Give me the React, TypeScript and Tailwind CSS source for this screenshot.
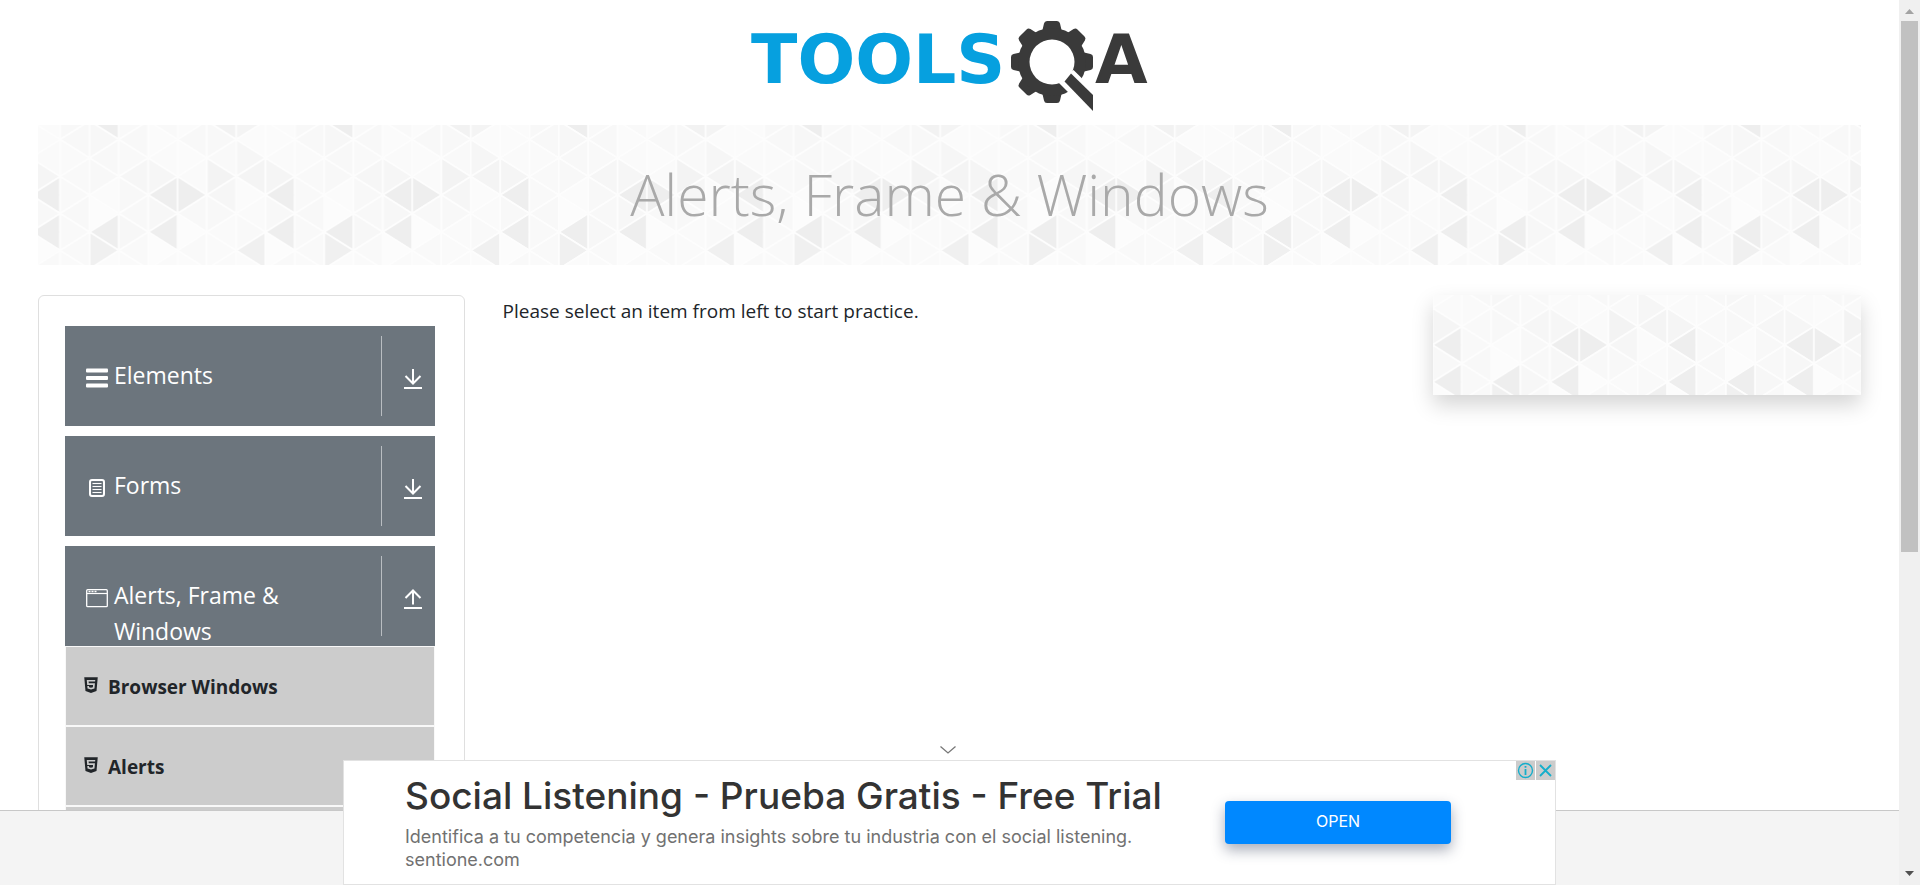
import type { ReactNode } from "react";
import { FaHtml5 } from "react-icons/fa";

const COL = 88 / 3;
const HALF = 18.5;
const TILE = COL * 8;

// One row of grey levels per column of triangles, top to bottom.
const SHADES = [
  ["fa", "fb", "f8", "fb", "fa", "ee", "f8", "fc", "f9", "fb", "fa"],
  ["fa", "f2", "f8", "f9", "f3", "f6", "f8", "fa", "fa", "fa", "fa"],
  ["fa", "f4", "fb", "f6", "f4", "fb", "fa", "f9", "f0", "fb", "fa"],
  ["fa", "fb", "fb", "fa", "f5", "ee", "f8", "ee", "fc", "f9", "fa"],
  ["fa", "f8", "f8", "fa", "f9", "f9", "f8", "f9", "f9", "fa", "fa"],
  ["fa", "ee", "f7", "f8", "f8", "fb", "fc", "ee", "f0", "fb", "fa"],
  ["fa", "f9", "f8", "f9", "f6", "f8", "f8", "f7", "f9", "fa", "fa"],
  ["fa", "f9", "fb", "fa", "f6", "ee", "f7", "ee", "fc", "fa", "fa"],
];

const TRIANGLES = SHADES.flatMap((column, c) =>
  column.map((shade, k) => {
    const j = k - 5;
    const left = c * COL;
    const right = left + COL;
    const y = j * HALF;
    const pointsRight = (c + j + 10) % 2 === 0;
    const base = pointsRight ? left : right;
    const apex = pointsRight ? right : left;
    return {
      key: `${c},${j}`,
      points: `${base},${y - HALF} ${apex},${y} ${base},${y + HALF}`,
      fill: `#${shade}${shade}${shade}`,
    };
  }),
);

function TriangleBackdrop({ id }: { id: string }) {
  return (
    <svg className="absolute inset-0 size-full" aria-hidden="true">
      <defs>
        <pattern id={id} x={-68} y={-100} width={TILE} height={200} patternUnits="userSpaceOnUse" viewBox={`0 -100 ${TILE} 200`}>
          {TRIANGLES.map((t) => (
            <polygon key={t.key} points={t.points} fill={t.fill} stroke="#fdfdfd" strokeWidth={1.8} strokeLinejoin="round" />
          ))}
        </pattern>
      </defs>
      <svg x="50%" y="50%" overflow="visible">
        <rect x={-3000} y={-100} width={6000} height={200} fill={`url(#${id})`} />
      </svg>
    </svg>
  );
}

function Logo() {
  return (
    <svg width="420" height="110" viewBox="0 0 420 110" role="img" aria-label="TOOLSQA">
      <text x="11" y="83" fontFamily="DejaVu Sans, sans-serif" fontWeight="700" fontSize="68" fill="#06a0df" dy="-10">TOOLS</text>
      <g fill="#3a3a3a">
        {[0, 45, 90, 135, 180, 225, 270, 315].map((a) => (
          <path key={a} d="M302 22 L304 13.500 Q304.500 11 307 11 H317 Q319.500 11 320 13.500 L322 22 Z" transform={`rotate(${a} 312 52)`} />
        ))}
        <circle cx="312" cy="52" r="34" />
      </g>
      <circle cx="312" cy="52" r="22.500" fill="#fff" />
      <path d="M333.500 60 L372 98 V114 H352 L328 82 L318 72 Z" fill="#fff" />
      <path d="M331 63.500 L353 85 V101 L324.500 71.500 Z" fill="#3a3a3a" />
      <text x="355" y="73" fontFamily="DejaVu Sans, sans-serif" fontWeight="700" fontSize="68" fill="#3a3a3a">A</text>
    </svg>
  );
}

function BarsIcon() {
  return (
    <svg width="22" height="20" viewBox="0 0 22 20" fill="#fff" aria-hidden="true">
      <rect y="0.500" width="22" height="4" rx="1" />
      <rect y="8" width="22" height="4" rx="1" />
      <rect y="15.500" width="22" height="4" rx="1" />
    </svg>
  );
}

function FormIcon() {
  return (
    <svg width="22" height="20" viewBox="0 0 22 20" fill="none" stroke="#fff" aria-hidden="true">
      <rect x="4" y="2" width="14" height="16" rx="2" strokeWidth="2" />
      <path d="M6.500 5.500H15.500M6.500 8.500H15.500M6.500 11.500H15.500M6.500 14.500H15.500" />
    </svg>
  );
}

function WindowIcon() {
  return (
    <svg width="22" height="20" viewBox="0 0 22 20" fill="none" stroke="#fff" aria-hidden="true">
      <rect x="0.700" y="1.700" width="20.600" height="17" rx="1" strokeWidth="1.300" />
      <path d="M1 5.500H21" strokeWidth="1.200" />
      <path d="M2.500 3.500H4.500M5.500 3.500H7.500M8.500 3.500H10.500" strokeWidth="1.500" />
    </svg>
  );
}

function Arrow({ up }: { up?: boolean }) {
  return (
    <svg width="18" height="20" viewBox="0 0 18 20" fill="none" stroke="#fff" strokeWidth="2" aria-hidden="true">
      <path d={up ? "M9 15.500V2M1.500 9L9 1.500L16.500 9" : "M9 0V14M1.500 7L9 14.500L16.500 7"} />
      <path d="M0 19H18" />
    </svg>
  );
}

function Group({ icon, label, open, children }: { icon: ReactNode; label: string; open?: boolean; children?: ReactNode }) {
  return (
    <div>
      <button type="button" aria-expanded={!!open} className="flex h-[100px] w-full bg-[#6c757d] py-2.5 text-left text-white">
        <span className="flex flex-1 gap-1.5 pt-[21px] pl-[21px]">
          <span className="mt-[11px] shrink-0">{icon}</span>
          <span className="max-w-48 text-[23px] leading-9">{label}</span>
        </span>
        <span className="flex h-20 w-[54px] items-center justify-center border-l border-[#b9bdc1] pt-1.5 pl-2.5">
          <Arrow up={open} />
        </span>
      </button>
      {children}
    </div>
  );
}

function Scrollbar() {
  return (
    <div className="flex w-[21px] shrink-0 flex-col items-center bg-[#f0f0f0]" aria-hidden="true">
      <svg width="21" height="21" viewBox="0 0 21 21"><path d="M6 14L10.500 9L15 14Z" fill="#a3a3a3" /></svg>
      <div className="w-full flex-1 px-0.5">
        <div className="h-[63%] bg-[#c1c1c1]" />
      </div>
      <svg width="21" height="21" viewBox="0 0 21 21"><path d="M6 7L10.500 12L15 7Z" fill="#505050" /></svg>
    </div>
  );
}

function Ad() {
  return (
    <section aria-label="Advertisement" className="relative flex h-[125px] w-full max-w-[1213px] border border-[#e2e2e2] bg-white pl-[61px] font-['Inter',sans-serif]">
      <div className="w-[820px] pt-[11px]">
        <h2 className="text-[37px] leading-[48px] font-medium text-[#333]">Social Listening - Prueba Gratis - Free Trial</h2>
        <p className="mt-[5px] text-[18px] leading-[23px] text-[#717171]">
          Identifica a tu competencia y genera insights sobre tu industria con el social listening.
          <br />
          sentione.com
        </p>
      </div>
      <button type="button" className="mt-10 h-[43px] w-[226px] rounded bg-[#0088ff] pb-1 text-base text-white shadow-[0_6px_14px_rgba(40,50,80,0.4)]">
        OPEN
      </button>
      <div className="absolute top-0 right-0 flex gap-px">
        <button type="button" aria-label="Ad information" className="flex size-[19px] items-center justify-center bg-[#ccc]">
          <svg width="17" height="17" viewBox="0 0 17 17" fill="none" stroke="#15aecb">
            <circle cx="8.500" cy="8.500" r="7" strokeWidth="1.400" />
            <path d="M8.500 7V13M8.500 4V5.800" strokeWidth="1.800" />
          </svg>
        </button>
        <button type="button" aria-label="Close ad" className="flex size-[19px] items-center justify-center bg-[#ccc]">
          <svg width="13" height="13" viewBox="0 0 13 13" fill="none" stroke="#15aecb" strokeWidth="1.800"><path d="M1 1L12 12M12 1L1 12" /></svg>
        </button>
      </div>
    </section>
  );
}

export default function App() {
  return (
    <div className="flex h-screen overflow-hidden bg-white font-['Open_Sans',sans-serif] text-[#212529]">
      <div className="relative min-w-0 flex-1 overflow-hidden">
        <header className="flex h-[125px] justify-center pt-2.5">
          <a href="#home"><Logo /></a>
        </header>
        <div className="px-[2%]">
          <div className="relative flex h-[140px] items-center justify-center overflow-hidden bg-[#fafafa]">
            <TriangleBackdrop id="banner-triangles" />
            <h1 className="relative pb-0.5 text-[57px] leading-[72px] font-light text-[#a9a9a9]">Alerts, Frame &amp; Windows</h1>
          </div>
          <div className="mt-[30px] flex items-start gap-[38px]">
            <nav className="flex w-[23.4%] shrink-0 flex-col gap-2.5 rounded-md border border-[#dfdfdf] pt-[30px] pr-[29px] pb-[30px] pl-[26px]">
              <Group icon={<BarsIcon />} label="Elements" />
              <Group icon={<FormIcon />} label="Forms" />
              <Group icon={<WindowIcon />} label="Alerts, Frame & Windows" open>
                <ul>
                  {["Browser Windows", "Alerts", "Frames"].map((item) => (
                    <li key={item} className="h-20 border border-[#f8f8f8] bg-[#ccc]">
                      <a href="#item" className="flex h-full items-center gap-2 pt-0.5 pl-4 text-[19px] font-bold">
                        <FaHtml5 className="mb-1 size-[18px]" />
                        {item}
                      </a>
                    </li>
                  ))}
                </ul>
              </Group>
            </nav>
            <main className="flex-1 text-[19px] leading-8">Please select an item from left to start practice.</main>
            <aside className="relative h-[100px] w-[23.5%] shrink-0 bg-[#fafafa] shadow-[0_10px_20px_rgba(0,0,0,0.17)]">
              <TriangleBackdrop id="aside-triangles" />
            </aside>
          </div>
        </div>
        <div className="absolute inset-x-0 bottom-0">
          <div className="absolute inset-x-0 bottom-0 h-[75px] border-t border-[#c8c8c8] bg-[#f4f4f4]" />
          <div className="relative flex flex-col items-center">
            <button type="button" aria-label="Collapse ad" className="mr-1 mb-1 flex h-3 w-6 items-center justify-center">
              <svg width="16" height="8" viewBox="0 0 16 8" fill="none" stroke="#777" strokeWidth="1.300"><path d="M0.500 0.500L8 7L15.500 0.500" /></svg>
            </button>
            <Ad />
          </div>
        </div>
      </div>
      <Scrollbar />
    </div>
  );
}
